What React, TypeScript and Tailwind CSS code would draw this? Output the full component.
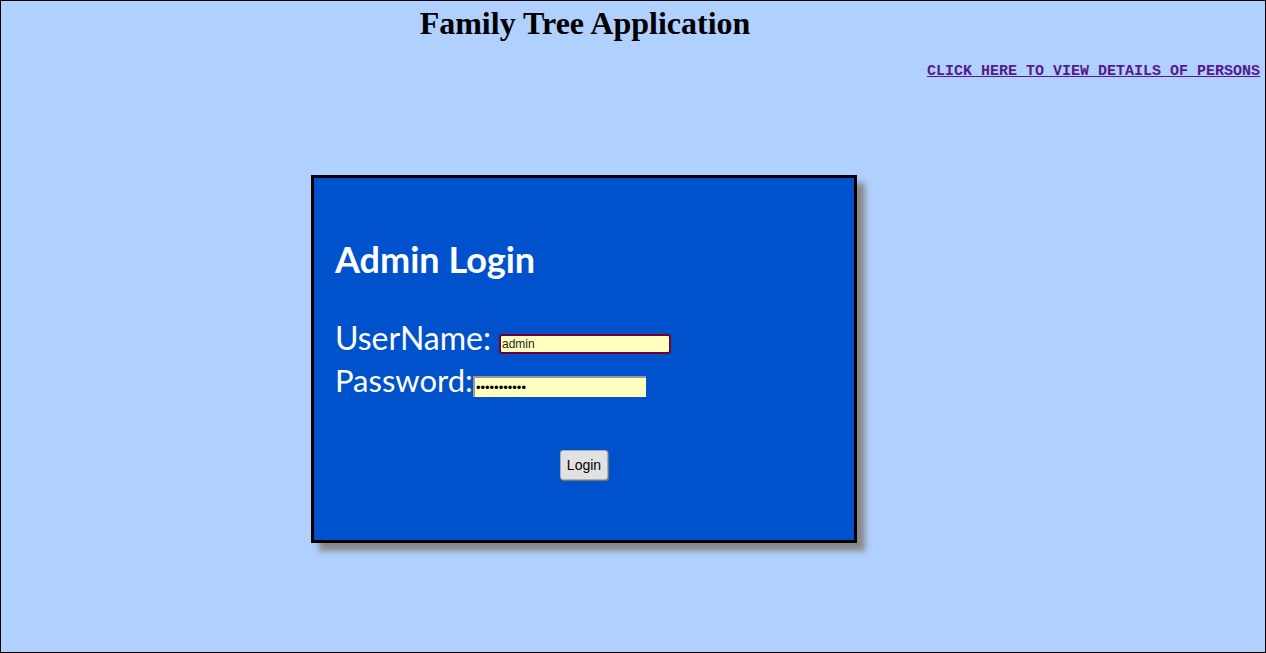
export default function App() {
  const comic = { fontFamily: '"Comic Sans MS", "Lato", sans-serif' };
  return (
    <div className="w-[1266px] h-[653px] bg-[#b0d0ff] border border-black box-border overflow-hidden">
      <div className="w-[1168px] pt-[3px] text-center">
        <h1 className="text-[32px] font-bold leading-[38px] text-black" style={{ fontFamily: '"Liberation Serif", serif' }}>
          Family Tree Application
        </h1>
      </div>
      <div className="flex justify-end pr-[5px] mt-[21px]">
        <a href="#" className="text-[15px] font-bold underline text-[#551a8b] leading-[18px]" style={{ fontFamily: '"Liberation Mono", monospace' }}>
          CLICK HERE TO VIEW DETAILS OF PERSONS
        </a>
      </div>
      <div className="ml-[310px] mt-[94px] w-[546px] h-[368px] bg-[#0052cc] border-[3px] border-black shadow-[8px_8px_6px_#888888] px-[21px] pt-[58px] text-white" style={comic}>
        <div className="text-[36px] font-bold leading-[46px]">Admin Login</div>
        <div className="mt-[37px] flex items-end text-[32px] leading-[38px]">
          <span>UserName:</span>
          <input
            readOnly
            value="admin"
            className="ml-[8px] mb-[3px] w-[172px] h-[20px] bg-[#ffffc0] border-2 border-[#700030] rounded-[3px] text-[12px] text-[#222] px-[1px] outline-none"
            style={{ fontFamily: '"Liberation Sans", sans-serif' }}
          />
        </div>
        <div className="mt-[4px] flex items-end text-[31px] leading-[38px]">
          <span>Password:</span>
          <input
            readOnly
            type="password"
            value="adminadmin1"
            className="ml-[0px] mb-[2px] w-[173px] h-[21px] bg-[#ffffc0] border-t-2 border-l-2 border-t-[#999999] border-l-[#999999] text-[13px] text-black px-[1px] outline-none"
            style={{ fontFamily: '"Liberation Sans", sans-serif' }}
          />
        </div>
        <div className="mt-[51px] flex justify-center pr-[0px]">
          <button
            className="w-[48px] h-[30px] bg-[#e1e1e1] border border-[#adadad] rounded-[3px] shadow-[1px_1px_1px_#777] text-[14px] text-black"
            style={{ fontFamily: '"Liberation Sans", sans-serif' }}
          >
            Login
          </button>
        </div>
      </div>
    </div>
  );
}
